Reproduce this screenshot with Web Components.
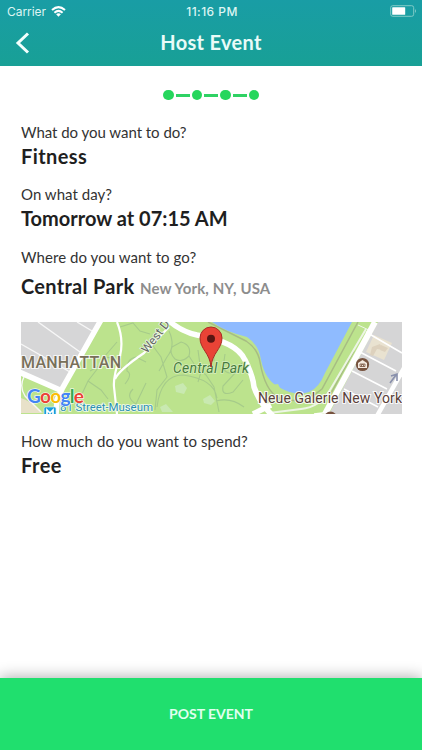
<!DOCTYPE html>
<html lang="en"><head><meta charset="utf-8"><title>Host Event</title>
<style>html,body{margin:0;height:100%;background:#fff}body{font-family:Lato,"Liberation Sans",sans-serif;color:#222}</style></head>
<body><host-event-app></host-event-app>
<script>
const define=(name,html)=>customElements.define(name,class extends HTMLElement{
 constructor(){super();this.attachShadow({mode:'open'}).innerHTML=html;}
});
define('status-bar',`<style>
:host{display:grid;grid-template-columns:1fr auto 1fr;align-items:center;height:22px;padding:0 5px 0 7px;box-sizing:border-box;font:12px Inter,sans-serif;color:#ddf5f3}
.l{display:flex;align-items:center;gap:5px}.carrier{letter-spacing:-.05px}.time{font-weight:500;letter-spacing:.45px}.b{justify-self:end}svg{display:block}
</style><div class="l"><span class="carrier">Carrier</span><svg width="15" height="11" viewBox="0 0 15 11" fill="none" stroke="#fff" stroke-width="2"><path d="M1 4.1Q7.5-1.8 14 4.1M3.4 6.7Q7.5 3 11.6 6.7"/><path d="M5.1 8.3Q7.5 6.3 9.9 8.3L7.5 10.8Z" fill="#fff" stroke="none"/></svg></div>
<span class="time">11:16 PM</span><svg class="b" width="27" height="12" viewBox="0 0 27 12"><rect x=".7" y=".7" width="23" height="10.6" rx="2" fill="none" stroke="#80cbc7"/><rect x="2.2" y="2.2" width="13" height="7.6" rx=".6" fill="#fff"/><path d="M25 4q2 2 0 4z" fill="#80cbc7"/></svg>`);
define('nav-bar',`<style>
:host{display:grid;grid-template-columns:44px 1fr 44px;align-items:center;height:41px}
svg{display:block;margin-left:15px}h1{margin:0;text-align:center;font-size:20px;line-height:24px;padding-bottom:1px;font-weight:700;color:#e9fbf8;letter-spacing:.3px}
</style><svg width="16" height="22" viewBox="0 0 16 22"><path d="M13 1.5 3 11 13 20.5" fill="none" stroke="#f2fffd" stroke-width="3"/></svg><h1><slot></slot></h1>`);
define('step-progress',`<style>:host{display:flex;align-items:center;justify-content:center;gap:2px;height:11px}
i{width:10.5px;height:10.5px;border-radius:50%;background:#26d65c}b{width:14px;height:3px;background:#2fd264}</style><i></i><b></b><i></i><b></b><i></i><b></b><i></i>`);
define('event-field',`<style>:host{display:block}
.q{font-size:15px;line-height:20px;color:#333;letter-spacing:var(--qs,.1px)}.a{display:flex;align-items:baseline;gap:5.5px;font-size:20px;line-height:26px;font-weight:700;letter-spacing:var(--as,0);margin-top:var(--gap,1px);color:#1f1f1f;white-space:nowrap}
::slotted([slot=detail]){font-size:15px;color:#8d8d8d;letter-spacing:.12px}</style>
<div class="q"><slot name="question"></slot></div><div class="a"><span><slot></slot></span><slot name="detail"></slot></div>`);
define('park-map',`<style>:host{display:block;height:92px}svg{display:block}text{font-family:Roboto,sans-serif}</style>
<svg width="381" height="92" viewBox="0 0 381 92"><rect width="381" height="92" fill="#bce38d"/>
<path d="M0 0H78L40 69 0 51Z" fill="#d6d6d7"/><path d="M0 76Q12 80 22 91H0Z" fill="#e8e1c9"/>
<g fill="none" stroke="#f7f7f7" stroke-width="1.4"><path d="M0 22 49 50M17 0 59 30M56 0 71 9M3 55Q-2 64 4 74L20 90"/></g>
<g fill="none" stroke="#a6cb8a" stroke-width="1.1"><path d="M99 5 112 1 119 9 129 12M96 20 83 35 77 46 67 59 61 72M67 59 80 68 87 77M82 35Q97 35 101 47M69 49 78 44M104 62Q112 52 106 49Q105 37 115 35L125 40M112 67Q104 75 115 82L125 61M129 20 140 35 146 55 136 68 134 88M148 9Q155 24 146 35L138 49M151 25 160 20Q171 23 168 34Q161 41 154 37Q148 31 151 25M168 34 175 45 185 53 193 65 198 90M136 85Q140 53 162 53Q193 57 196 76M177 28 180 50 177 60M193 26 193 39M204 32 202 46Q206 54 216 49L221 41M216 49 202 64Q200 75 212 70L222 58M195 79Q210 75 223 85"/></g>
<g fill="#c9e9b1"><path d="m154 64 8-3 4 5-3 6-8-2zM182 77l7-4 5 6-4 4-7-2zM139 85l6-3 7 8h-11z"/></g>
<path d="M187 0Q205 9 225 19Q237 27 239 40Q244 69 258 76Q282 84 301 67L337 0M333 29 308 75" fill="none" stroke="#a7bd83" stroke-width="1.5"/>
<path d="M191 0Q205 10 226 15Q238 23 240 38Q244 57 256 64Q273 75 288 70Q298 66 304 51L331 0Z" fill="#8fbbff"/><path d="m251 63 6-1 3 6-8-1z" fill="#bce38d"/>
<path d="M345 7 309 68Q299 85 280 87L248 91" fill="none" stroke="#edf5e5" stroke-width="2"/><path d="M337 3 350 9" stroke="#eef7e9"/>
<path d="M357 0H381V92H308Z" fill="#d5d5d6"/><path d="M353 13 371 21 363 38 345 30Z" fill="#e9e2d0"/><path d="m351 25 8-3 3 6-6-1-4 7-3-1zm9-2 7 3-3 4-5-2z" fill="#ddd1bd"/>
<g fill="none" stroke="#fff"><path d="M354 0 304 92" stroke-width="6"/><path d="M345 10 381 31M337 29 375 49M331 49 366 67M323 67 357 85M293 92 310 90" stroke-width="1.6"/><path d="M383 46 356 94" stroke-width="4.5"/><path d="M80-2 41 67 36 78 35 93M-2 50 39 68" stroke-width="5.5"/><path d="M96 0Q103 17 99 34Q92 55 93 65L96 92M94 57Q98 48 123 31L148 5" stroke-width="2.2"/><path d="M148-1Q161 10 176 13Q216 20 224 38Q232 54 233 65Q239 82 252 94M232 92 250 83" stroke-width="5.5"/></g>
<path d="m369 61 6-8m-5 1 6-2v7" fill="none" stroke="#8990ac" stroke-width="1.6"/>
<g font-size="16" font-weight="500" fill="#78705a" stroke="#fff" stroke-opacity=".75" stroke-width="2.2" paint-order="stroke"><text x="0" y="45.5" textLength="100">MANHATTAN</text></g>
<text transform="translate(126 32) rotate(-52)" font-size="12" fill="#606660" stroke="#eef7e5" stroke-width="1.5" paint-order="stroke" textLength="38">West D</text>
<text x="152" y="51" font-size="14" font-style="italic" fill="#467b3c" stroke="#d9efc1" stroke-width="1.5" paint-order="stroke" textLength="76">Central Park</text>
<text x="39" y="88.5" font-size="11.5" fill="#2b8fb3" stroke="#effbea" stroke-width="1.7" paint-order="stroke" textLength="93">81 Street-Museum</text>
<text x="237" y="81" font-size="14" fill="#5a4039" stroke="#fff" stroke-opacity=".85" stroke-width="2.2" paint-order="stroke" textLength="144">Neue Galerie New York</text>
<circle cx="341.5" cy="42.5" r="6.6" fill="#77533f"/><path d="m337 41 4.5-3 4.5 3v5h-9z" fill="#f4e9df"/><path d="M339 42h5v2.5h-5zm1.5 2.5V42.5h2v2" fill="none" stroke="#77533f" stroke-width=".8"/><circle cx="309.5" cy="96" r="6.5" fill="#77533f"/>
<rect x="23" y="85" width="12" height="8" rx="1.5" fill="#179edb" stroke="#d9effb" stroke-width=".7"/><path d="M26 92v-4l3 3 3-3v4" fill="none" stroke="#fff" stroke-width="1.7"/>
<text x="6" y="80.5" style="font-family:Lato" font-size="19" font-weight="700" stroke="#fff" stroke-width="1.2" paint-order="stroke" textLength="57"><tspan fill="#4285f4">G</tspan><tspan fill="#ea4335">o</tspan><tspan fill="#fbbc05">o</tspan><tspan fill="#4285f4">g</tspan><tspan fill="#34a853">l</tspan><tspan fill="#ea4335">e</tspan></text>
<path d="M190 45C189 31 179 27 179 16A11 11 0 0 1 201 16C201 27 191 31 190 45Z" fill="#e94336" stroke="#a92c25" stroke-width="1"/><circle cx="190" cy="16.7" r="4" fill="#591512"/></svg>`);
define('post-button',`<style>:host{display:block;height:72px;box-shadow:0 -1px 14px rgba(0,0,0,.32)}button{all:unset;box-sizing:border-box;width:100%;height:100%;padding-bottom:2px;text-align:center;background:#20df6e;color:#e1fff0;font-size:14px;font-weight:700}</style><button><slot></slot></button>`);
define('host-event-app',`<style>
:host{display:flex;flex-direction:column;width:422px;height:750px;overflow:hidden;background:#fff}
header{height:65.5px;background:linear-gradient(#199da5,#18a096)}main{flex:1;padding:24px 21px 0;display:flex;flex-direction:column}
step-progress{margin-bottom:21px}.f1,.f2{margin-bottom:15.5px}.f1{--qs:-.03px;--as:.4px}.f2{--qs:.03px}.f3{--qs:.06px;--as:.3px;--gap:6px;margin-bottom:21px}.f4{--as:.5px}park-map{margin-bottom:17.5px}
</style><header><status-bar></status-bar><nav-bar>Host Event</nav-bar></header>
<main><step-progress></step-progress>
<event-field class="f1"><span slot="question">What do you want to do?</span>Fitness</event-field>
<event-field class="f2"><span slot="question">On what day?</span>Tomorrow at 07:15 AM</event-field>
<event-field class="f3"><span slot="question">Where do you want to go?</span>Central Park<span slot="detail">New York, NY, USA</span></event-field>
<park-map></park-map>
<event-field class="f4"><span slot="question">How much do you want to spend?</span>Free</event-field></main>
<post-button>POST EVENT</post-button>`);
</script></body></html>
